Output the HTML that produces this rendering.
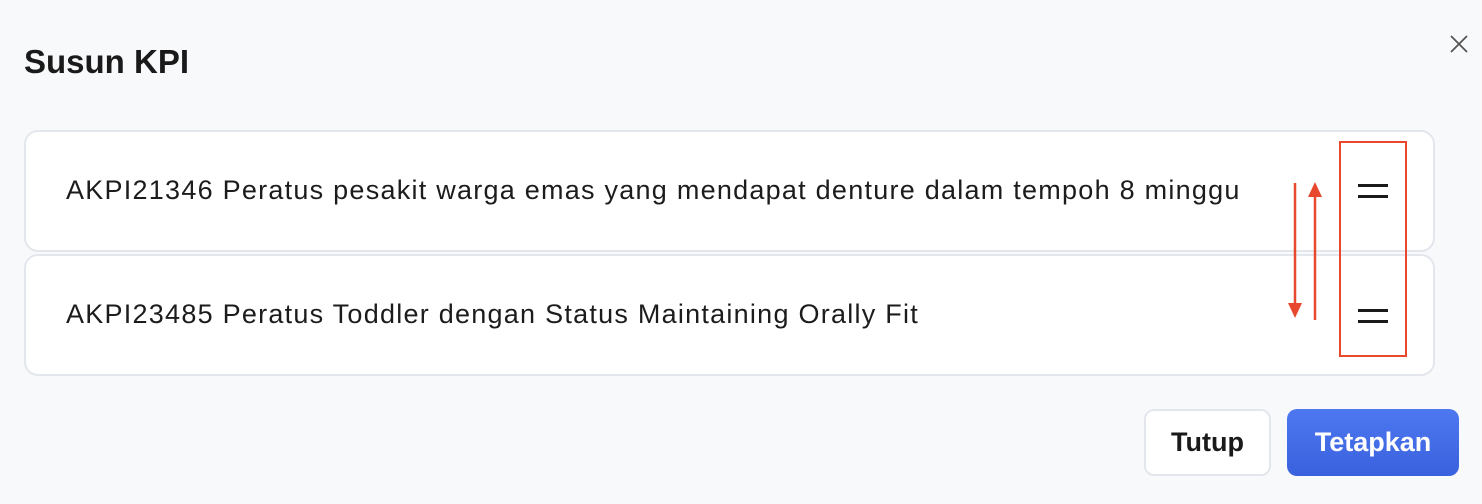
<!DOCTYPE html>
<html><head><style>
*{margin:0;padding:0;box-sizing:border-box}
body{width:1482px;height:504px;background:#f8f9fb;font-family:"Liberation Sans",sans-serif;position:relative;overflow:hidden;color:#1a1a1a}
.t{position:absolute;left:24px;top:43px;font-size:33px;font-weight:bold;letter-spacing:0px}
.card{position:absolute;left:24px;width:1411px;height:122px;background:#fff;border:2px solid #e3e6ec;border-radius:14px}
.card span{position:absolute;left:40px;top:43px;font-size:27px;letter-spacing:1.25px;color:#1c1c1c;white-space:nowrap}
.ham{position:absolute;left:1358px;width:30px;height:14px;border-top:3px solid #1a1a1a;border-bottom:3px solid #1a1a1a}
.btn{position:absolute;top:409px;height:67px;border-radius:10px;font-size:27px;font-weight:bold;display:flex;align-items:center;justify-content:center}
</style></head><body>
<div class="t">Susun KPI</div>
<svg style="position:absolute;left:1448px;top:33px" width="22" height="22"><path d="M3 3L19 19M19 3L3 19" stroke="#555" stroke-width="1.8"/></svg>
<div class="card" style="top:130px"><span>AKPI21346 Peratus pesakit warga emas yang mendapat denture dalam tempoh 8 minggu</span></div>
<div class="card" style="top:254px"><span>AKPI23485 Peratus Toddler dengan Status Maintaining Orally Fit</span></div>
<div class="ham" style="top:184px"></div>
<div class="ham" style="top:309px"></div>
<div style="position:absolute;left:1339px;top:141px;width:68px;height:216px;border:2.5px solid #e8492e"></div>
<svg style="position:absolute;left:1280px;top:175px" width="50" height="150">
<path d="M15 8V132" stroke="#e8492e" stroke-width="2.5"/><path d="M8 128L22 128L15 143Z" fill="#e8492e"/>
<path d="M35 20V145" stroke="#e8492e" stroke-width="2.5"/><path d="M28 22L42 22L35 7Z" fill="#e8492e"/>
</svg>
<div class="btn" style="left:1144px;width:127px;background:#fff;border:2px solid #e3e6ec;color:#1a1a1a">Tutup</div>
<div class="btn" style="left:1287px;width:172px;background:linear-gradient(#4d78f0,#3a61de);color:#fff">Tetapkan</div>
</body></html>
